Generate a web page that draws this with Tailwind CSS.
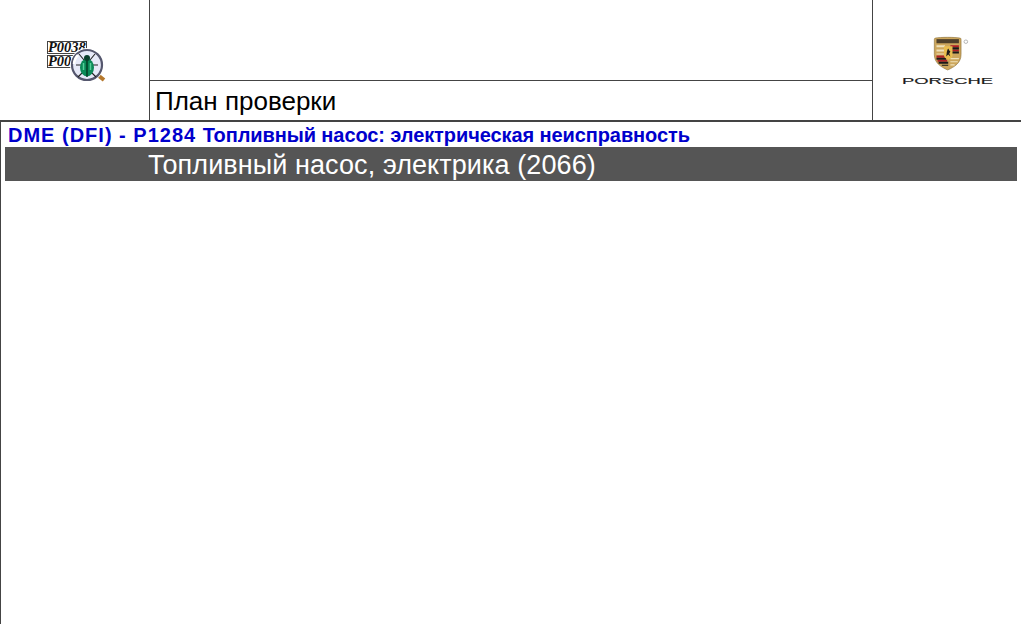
<!doctype html>
<html>
<head>
<meta charset="utf-8">
<script src="https://cdn.jsdelivr.net/npm/@tailwindcss/browser@4"></script>
</head>
<body class="bg-white overflow-hidden">
<div class="w-[1021px] h-[624px] flex flex-col font-['Liberation_Sans',Arial,sans-serif] overflow-hidden">
  <header class="h-[122px] shrink-0 flex border-b-2 border-[#444]">
    <div class="w-[150px] shrink-0 border-r border-[#444] flex items-start">
      <svg class="ml-[46px] mt-[40px]" width="62" height="44" viewBox="0 0 62 44">
        <rect x="1.5" y="1.500" width="39" height="12" fill="#fff" stroke="#444"/>
        <rect x="1.5" y="15.500" width="39" height="12" fill="#fff" stroke="#444"/>
        <text x="2" y="11.500" font-family="Liberation Serif" font-size="14.500" font-weight="700" font-style="italic" fill="#111">P0038</text>
        <text x="2" y="25.500" font-family="Liberation Serif" font-size="14.500" font-weight="700" font-style="italic" fill="#111">P00</text>
        <path d="M53 36l5 4" stroke="#b5782c" stroke-width="4"/>
        <circle cx="41" cy="25" r="17" fill="#fff"/>
        <circle cx="41" cy="25" r="15" fill="#e6e9f8" stroke="#55576e" stroke-width="2.200"/>
        <path d="M32 15a13 13 0 0 0-4 9" fill="none" stroke="#fff" stroke-width="2.500"/>
        <path d="M33 14l5 6M49 14l-5 6M30 25h7M52 25h-7M32 37l6-6M50 37l-6-6" stroke="#222" stroke-width="1.100"/>
        <ellipse cx="41" cy="27.500" rx="7" ry="9" fill="#0b8a58"/>
        <path d="M41 20v17" stroke="#03301d" stroke-width="1.300"/>
        <path d="M37.500 23v7M44.500 23v7" stroke="#55d09a" stroke-width="1.500"/>
        <circle cx="41" cy="18" r="3" fill="#0a3f2b"/>
      </svg>
    </div>
    <div class="flex-1 flex flex-col min-w-0">
      <div class="h-[81px] border-b border-[#444]"></div>
      <div class="pl-[5px] pt-[5px] text-[26px] leading-[30px] text-black">План проверки</div>
    </div>
    <div class="w-[149px] shrink-0 border-l border-[#444] flex flex-col items-start">
      <svg class="mt-[34px] ml-[56px] blur-[0.3px]" width="47" height="37" viewBox="0 0 44 36" preserveAspectRatio="none">
        <path d="M6 4c4-1 19-1 23 0 1 0 1 1 1 2v14c0 8-6 12-12.500 15C11 32 5 28 5 20V6c0-1 0-2 1-2z" fill="#cda75d" stroke="#8c7138" stroke-width=".6"/>
        <rect x="7" y="5" width="21" height="4" fill="#4d3f2a"/>
        <path d="M7 11h8v2H7zM7 15h8v2H7zM7 19h8v1H7z" fill="#efe2bb"/>
        <path d="M20 11h8v2h-8zM20 15h8v2h-8z" fill="#b01f24"/>
        <path d="M20 13h8v2h-8zM20 17h8v2h-8z" fill="#1a1a1a"/>
        <path d="M7 21h9v2H7zM8 25h9v2H8z" fill="#b01f24"/>
        <path d="M7 23h9v2H7zM9 27h9v2H9zM12 30h6v1h-6z" fill="#1a1a1a"/>
        <path d="M20 24h8M20 27h7M20 30h4" stroke="#efe2bb" stroke-width="1.200"/>
        <path d="M14 12h8v9c0 2-2 3-4 4-2-1-4-2-4-4z" fill="#e8bd4f"/>
        <path d="M16 22c1-3 0-5 2-8l1 2 1 1-1 2 1 3-2-2z" fill="#1c1c1c"/>
        <circle cx="34.500" cy="7.500" r="1.700" fill="none" stroke="#aaa" stroke-width=".8"/>
      </svg>
      <svg class="mt-[2px] ml-[28px]" width="93" height="14" viewBox="0 0 93 14">
        <text x="1" y="11" font-family="Liberation Sans" font-size="9.500" fill="#1a1a1a" stroke="#1a1a1a" stroke-width=".15" textLength="91" lengthAdjust="spacingAndGlyphs">PORSCHE</text>
      </svg>
    </div>
  </header>
  <main class="flex-1 border-l border-[#444] pl-1 pr-1 min-h-0">
    <h1 class="pl-[3px] pt-[2px] h-[25px] text-[20px] leading-[23px] font-bold text-[#0000cc] whitespace-nowrap"><span class="tracking-[1px]">DME (DFI) - P1284 </span><span class="tracking-[-0.09px]">Топливный насос: электрическая неисправность</span></h1>
    <div class="h-[34px] bg-[#555] pl-[143px] text-[27px] leading-[36px] tracking-[0.09px] text-white whitespace-nowrap">Топливный насос, электрика (2066)</div>
  </main>
</div>
</body>
</html>
